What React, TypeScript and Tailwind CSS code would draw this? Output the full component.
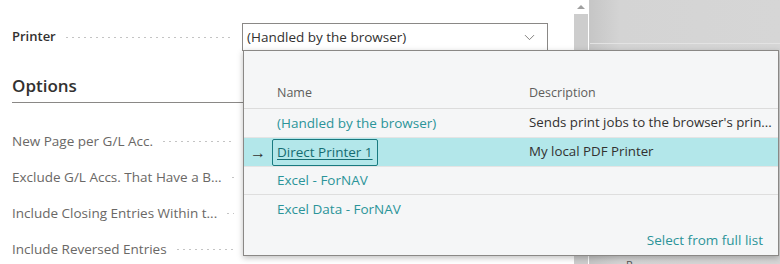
import { ChevronDown } from "lucide-react";

const dots =
  "flex-1 h-[3px] mx-2 bg-[radial-gradient(circle,#c4c4c4_0.8px,transparent_1px)] bg-[length:6px_3px] bg-repeat-x";

const options = [
  "New Page per G/L Acc.",
  "Exclude G/L Accs. That Have a B...",
  "Include Closing Entries Within t...",
  "Include Reversed Entries",
];

const rows = [
  { name: "(Handled by the browser)", desc: "Sends print jobs to the browser's prin..." },
  { name: "Direct Printer 1", desc: "My local PDF Printer", selected: true },
  { name: "Excel - ForNAV", desc: "" },
  { name: "Excel Data - ForNAV", desc: "" },
];

function FieldRow({ label, strong }: { label: string; strong?: boolean }) {
  return (
    <div className="flex items-center w-[230px]">
      <span
        className={
          strong
            ? "text-[13px] font-semibold text-[#323130] whitespace-nowrap"
            : "text-[13.5px] text-[#6a6866] whitespace-nowrap"
        }
      >
        {label}
      </span>
      <div className={dots} />
    </div>
  );
}

export default function App() {
  return (
    <div
      className="relative w-[780px] h-[264px] overflow-hidden flex bg-white"
      style={{ fontFamily: '"Open Sans", "Noto Sans", sans-serif' }}
    >
      {/* left form panel */}
      <div className="w-[573px] pl-3 pt-[23px]">
        <div className="flex items-center">
          <FieldRow label="Printer" strong />
          <div className="w-[306px] h-[28px] border border-[#8a8886] flex items-center justify-between pl-[4px] pr-[9px]">
            <span className="text-[13.5px] text-[#323130]">(Handled by the browser)</span>
            <ChevronDown size={17} strokeWidth={1.1} className="text-[#605e5c]" />
          </div>
        </div>

        <div className="mt-[24px] mr-[10px] border-b-[1.5px] border-[#8a8886] pb-[5px]">
          <h2 className="text-[17px] font-semibold text-[#323130] leading-[22px]">Options</h2>
        </div>

        <div className="flex flex-col mt-[28px] gap-[16px]">
          {options.map((o) => (
            <div key={o} className="h-[20px] flex items-center">
              <FieldRow label={o} />
            </div>
          ))}
        </div>
      </div>

      {/* scrollbar */}
      <div className="w-[16px] flex flex-col items-center bg-white">
        <div className="h-[14px] flex items-center justify-center">
          <div className="w-0 h-0 border-l-[4px] border-r-[4px] border-b-[4px] border-l-transparent border-r-transparent border-b-[#a0a0a0]" />
        </div>
        <div className="w-[14px] flex-1 bg-[#cdcdcd]" />
      </div>

      {/* right gray area */}
      <div className="flex-1 border-l border-[#c8c8c8] bg-[linear-gradient(to_right,#c6c6c6,#d4d4d4_30px,#d6d6d6)] flex flex-col">
        <div className="h-[43px]" />
        <div className="h-[1px] bg-[#e3e3e3]" />
        <div className="flex-1" />
        <div className="h-[9px] pl-[36px] text-[11px] leading-[20px] text-[#555]">P</div>
      </div>

      {/* dropdown overlay */}
      <div className="absolute left-[243px] top-[50px] w-[536px] h-[206px] bg-[#f5f6f7] border border-[#8a8886] shadow-[0_2px_6px_rgba(0,0,0,0.25)] flex flex-col">
        <div className="h-[58px] flex items-end pb-[5px] border-b border-[#dcdcdc] text-[12.5px] text-[#605e5c]">
          <span className="pl-[33px] w-[285px]">Name</span>
          <span>Description</span>
        </div>
        {rows.map((r, i) => (
          <div
            key={r.name}
            className={
              (r.selected ? "bg-[#b3e7ea] " : "") +
              (i === 2 ? "h-[28px] border-b border-[#dedede] " : i < 2 ? "h-[29px] border-b border-[#e4e4e4] " : "h-[28px] ") +
              "flex items-center text-[13.5px]"
            }
          >
            <span className="w-[28px] pl-[6px] text-[16px] text-[#323130]">{r.selected ? "→" : ""}</span>
            <span className="w-[257px]">
              {r.selected ? (
                <span className="inline-block border border-[#1a7a80] rounded-[2px] px-[4px] leading-[25px] text-[#156d72] underline underline-offset-2">
                  {r.name}
                </span>
              ) : (
                <span className="pl-[5px] text-[#2b9499]">{r.name}</span>
              )}
            </span>
            <span className="text-[13.3px] text-[#323130] whitespace-nowrap">{r.desc}</span>
          </div>
        ))}
        <div className="flex-1 flex items-end justify-end pr-[15px] pb-[5px]">
          <span className="text-[13.5px] text-[#2b9499]">Select from full list</span>
        </div>
      </div>
    </div>
  );
}
